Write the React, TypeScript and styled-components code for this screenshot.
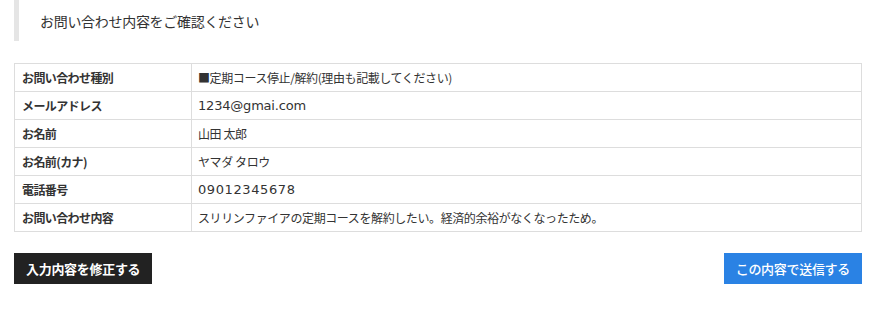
import React from "react";
import styled, { createGlobalStyle } from "styled-components";

const Global = createGlobalStyle`
  html, body { margin: 0; padding: 0; background: #fff; }
  body { font-family: "Noto Sans CJK JP", "Noto Sans", sans-serif; color: #333; }
`;

const Page = styled.div`
  width: 848px;
  margin-left: 14px;
  display: flex;
  flex-direction: column;
`;

const Heading = styled.h2`
  margin: 0;
  height: 41px;
  display: flex;
  align-items: center;
  border-left: 5px solid #e5e5e5;
  padding-left: 21px;
  font-size: 14px;
  font-weight: 400;
  color: #333;
  letter-spacing: -0.3px;
`;

const Table = styled.table`
  margin-top: 22px;
  width: 848px;
  border-collapse: collapse;
  table-layout: fixed;
`;

const Row = styled.tr`
  height: 28px;
`;

const Label = styled.th`
  width: 177px;
  box-sizing: border-box;
  border: 1px solid #ddd;
  padding: 0 7px;
  text-align: left;
  font-size: 12px;
  font-weight: 700;
  letter-spacing: -0.6px;
  color: #333;
`;

const Value = styled.td<{ $latin?: boolean; $track?: number }>`
  border: 1px solid #ddd;
  padding: 0 6px;
  font-family: ${(p) =>
    p.$latin ? `"DejaVu Sans", "Noto Sans CJK JP", sans-serif` : "inherit"};
  font-size: ${(p) => (p.$latin ? "13px" : "12px")};
  letter-spacing: ${(p) => (p.$latin ? `${p.$track ?? 0}px` : "-0.4px")};
  color: #333;
`;

const Actions = styled.div`
  margin-top: 21px;
  display: flex;
  justify-content: space-between;
`;

const Button = styled.button<{ $primary?: boolean }>`
  height: 31px;
  padding: 0 12px;
  border: none;
  border-radius: 0;
  font-family: inherit;
  font-size: 13px;
  letter-spacing: -0.3px;
  font-weight: ${(p) => (p.$primary ? 500 : 700)};
  color: #fff;
  background: ${(p) => (p.$primary ? "#2a82e4" : "#222")};
  cursor: pointer;
`;

const rows: { label: string; value: string; latin?: boolean; track?: number }[] = [
  { label: "お問い合わせ種別", value: "■定期コース停止/解約(理由も記載してください)" },
  { label: "メールアドレス", value: "1234@gmai.com", latin: true, track: -0.2 },
  { label: "お名前", value: "山田 太郎" },
  { label: "お名前(カナ)", value: "ヤマダ タロウ" },
  { label: "電話番号", value: "09012345678", latin: true, track: 0.6 },
  {
    label: "お問い合わせ内容",
    value: "スリリンファイアの定期コースを解約したい。経済的余裕がなくなったため。",
  },
];

export default function App() {
  return (
    <>
      <Global />
      <Page>
        <Heading>お問い合わせ内容をご確認ください</Heading>
        <Table>
          <tbody>
            {rows.map((r) => (
              <Row key={r.label}>
                <Label>{r.label}</Label>
                <Value $latin={r.latin} $track={r.track}>
                  {r.value}
                </Value>
              </Row>
            ))}
          </tbody>
        </Table>
        <Actions>
          <Button>入力内容を修正する</Button>
          <Button $primary>この内容で送信する</Button>
        </Actions>
      </Page>
    </>
  );
}
